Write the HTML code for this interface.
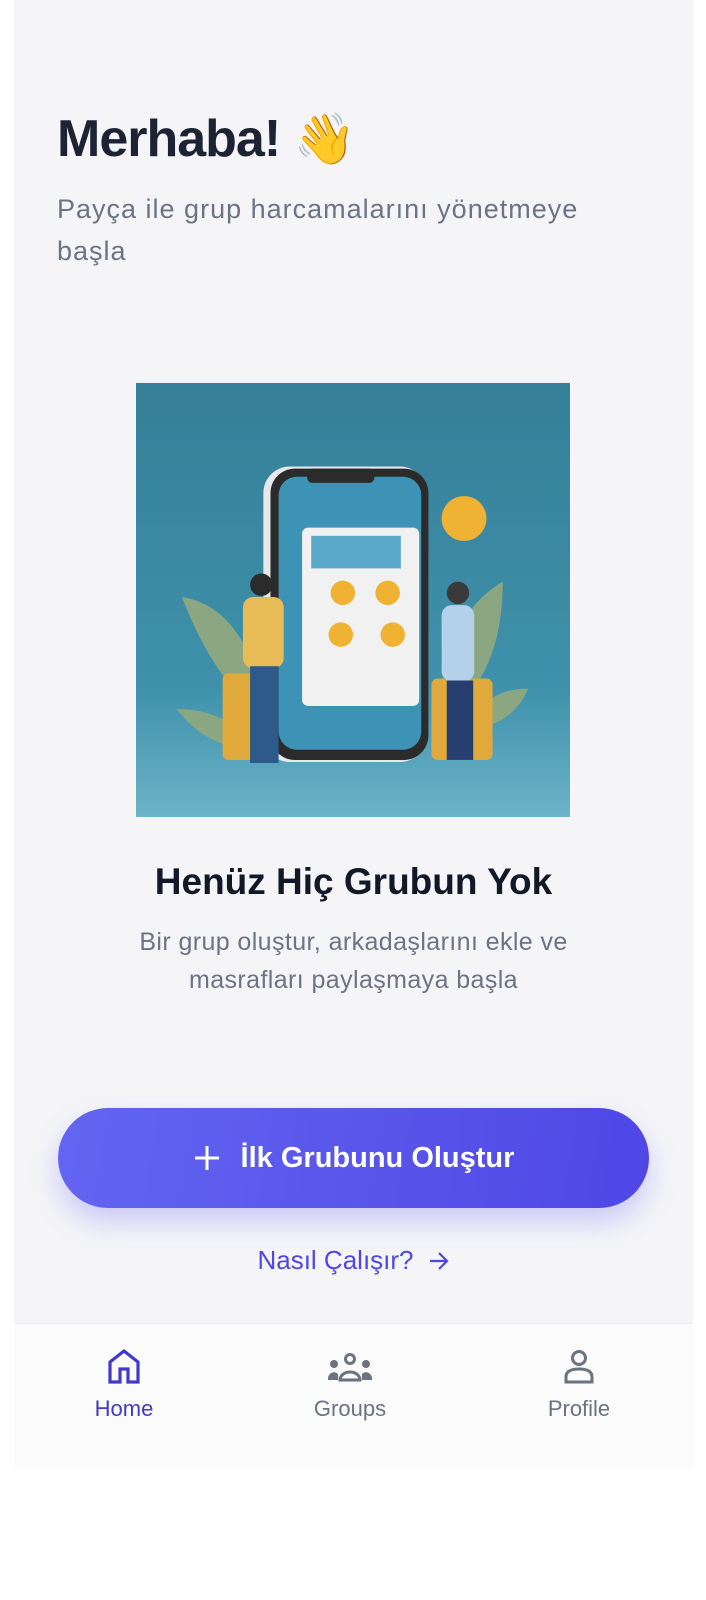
<!DOCTYPE html>
<html><head><meta charset="utf-8"><style>
*{margin:0;padding:0;box-sizing:border-box}
body{width:706px;height:1600px;background:#fff;font-family:"Liberation Sans","DejaVu Sans",sans-serif;position:relative;overflow:hidden}
.panel{position:absolute;left:14px;top:0;width:679px;height:1323px;background:#f5f5f8}
.nav{position:absolute;left:14px;top:1323px;width:679px;height:145px;background:#fbfbfc;border-top:1px solid #ececf0}
.abs{position:absolute}
h1{position:absolute;left:57px;top:107px;font-size:52px;line-height:64px;font-weight:bold;color:#1c2333;letter-spacing:-1px;white-space:nowrap}
.sub{position:absolute;left:57px;top:188px;width:575px;font-size:27px;line-height:42px;letter-spacing:1px;color:#6b7385}
.t2{position:absolute;left:14px;width:679px;text-align:center}
.btn{position:absolute;left:58px;top:1108px;width:591px;height:100px;border-radius:50px;background:linear-gradient(100deg,#6366f1,#4f46e5);box-shadow:0 14px 28px rgba(99,102,241,.3);color:#fff;font-size:29px;font-weight:bold;display:flex;align-items:center;justify-content:center}
.lbl{position:absolute;top:1396px;font-size:22px;width:120px;text-align:center}
</style></head><body>
<div class="panel"></div>
<h1>Merhaba! <span style="font-size:50px;letter-spacing:0">👋</span></h1>
<div class="sub">Payça ile grup harcamalarını yönetmeye başla</div>

<svg class="abs" style="left:136px;top:383px" width="434" height="434" viewBox="0 0 426 426">
<defs><linearGradient id="bg" x1="0" y1="0" x2="0" y2="1"><stop offset="0" stop-color="#357f98"/><stop offset=".7" stop-color="#3f91ab"/><stop offset="1" stop-color="#6bb3c8"/></linearGradient></defs>
<rect width="426" height="426" fill="url(#bg)"/>
<path d="M45 210 Q110 220 130 330 Q80 300 45 210Z" fill="#8aa782"/>
<path d="M40 320 Q90 320 120 360 Q70 360 40 320Z" fill="#8aa782"/>
<path d="M360 195 Q300 230 300 330 Q360 290 360 195Z" fill="#8aa782"/>
<path d="M385 300 Q340 300 330 340 Q370 335 385 300Z" fill="#8aa782"/>
<rect x="85" y="285" width="55" height="85" rx="6" fill="#e0a93c"/>
<rect x="290" y="290" width="60" height="80" rx="6" fill="#e0a93c"/>
<rect x="125" y="82" width="160" height="290" rx="26" fill="#e8e8e8"/>
<rect x="132" y="84" width="155" height="286" rx="24" fill="#2b2b2b"/>
<rect x="140" y="92" width="140" height="268" rx="18" fill="#3d93b5"/>
<rect x="168" y="84" width="66" height="14" rx="5" fill="#2b2b2b"/>
<rect x="163" y="142" width="115" height="175" rx="6" fill="#f1f1f1"/>
<rect x="172" y="150" width="88" height="32" fill="#5aa9c8"/>
<circle cx="203" cy="206" r="12" fill="#f0b233"/><circle cx="247" cy="206" r="12" fill="#f0b233"/>
<circle cx="201" cy="247" r="12" fill="#f0b233"/><circle cx="252" cy="247" r="12" fill="#f0b233"/>
<circle cx="322" cy="133" r="22" fill="#f0b233"/>
<circle cx="123" cy="198" r="11" fill="#2b2b2b"/>
<rect x="105" y="210" width="40" height="70" rx="10" fill="#e7bb55"/>
<rect x="112" y="278" width="28" height="95" fill="#2e5a8a"/>
<circle cx="316" cy="206" r="11" fill="#3a3a3a"/>
<rect x="300" y="218" width="32" height="75" rx="10" fill="#b4d1ea"/>
<rect x="305" y="292" width="26" height="78" fill="#273f6e"/>
</svg>

<div class="t2" style="top:861px;font-size:37px;font-weight:bold;color:#111827">Henüz Hiç Grubun Yok</div>
<div class="t2" style="top:923px;font-size:25px;line-height:38px;letter-spacing:0.4px;color:#6b7385;padding:0 115px">Bir grup oluştur, arkadaşlarını ekle ve masrafları paylaşmaya başla</div>

<div class="btn"><svg width="28" height="28" viewBox="0 0 28 28" style="margin-right:20px"><path d="M14 2V26M2 14H26" stroke="#fff" stroke-width="3"/></svg>İlk Grubunu Oluştur</div>
<div class="abs" style="left:14px;width:679px;top:1245px;display:flex;justify-content:center;align-items:center;font-size:26px;color:#4f46e5">Nasıl Çalışır?<svg width="22" height="22" viewBox="0 0 22 22" style="margin-left:14px"><path d="M2 11H19M11 3L19 11L11 19" fill="none" stroke="#4f46e5" stroke-width="2.2"/></svg></div>

<div class="nav"></div>
<svg class="abs" style="left:107px;top:1349px" width="34" height="36" viewBox="0 0 34 36"><path d="M3 33V13L17 2L31 13V33H21V20H13V33Z" fill="none" stroke="#4338ca" stroke-width="3.2"/></svg>
<svg class="abs" style="left:328px;top:1352px" width="44" height="30" viewBox="0 0 44 30"><circle cx="22" cy="7" r="4.5" fill="none" stroke="#6b7280" stroke-width="3"/><path d="M12 28a10 8 0 0 1 20 0Z" fill="none" stroke="#6b7280" stroke-width="3"/><circle cx="6" cy="12" r="4" fill="#6b7280"/><circle cx="38" cy="12" r="4" fill="#6b7280"/><path d="M0 28a6 7 0 0 1 10-6v6Z M44 28a6 7 0 0 0-10-6v6Z" fill="#6b7280"/></svg>
<svg class="abs" style="left:563px;top:1349px" width="32" height="36" viewBox="0 0 32 36"><circle cx="16" cy="9" r="6.5" fill="none" stroke="#6b7280" stroke-width="3"/><path d="M3 33V28Q3 20 16 20Q29 20 29 28V33Z" fill="none" stroke="#6b7280" stroke-width="3"/></svg>
<div class="lbl" style="left:64px;color:#4338ca">Home</div>
<div class="lbl" style="left:290px;color:#6b7280">Groups</div>
<div class="lbl" style="left:519px;color:#6b7280">Profile</div>
</body></html>
